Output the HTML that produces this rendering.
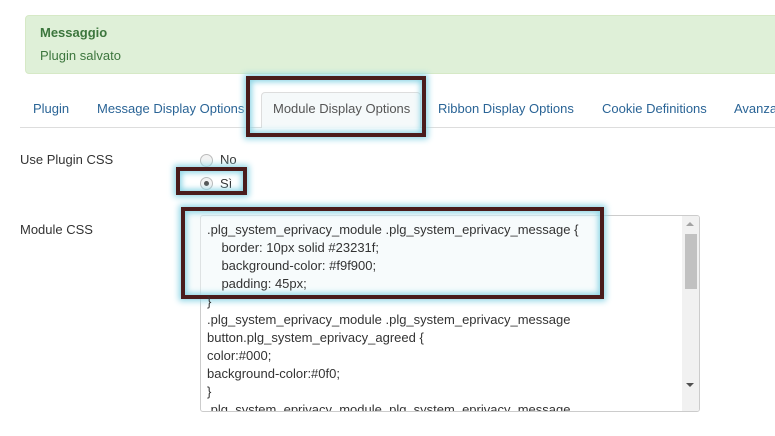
<!DOCTYPE html>
<html><head><meta charset="utf-8"><style>
body{margin:0;width:775px;height:436px;overflow:hidden;background:#fff;font-family:"Liberation Sans",sans-serif;font-size:13px;color:#333;position:relative}
.a{position:absolute}
.alert{left:25px;top:15px;width:760px;height:57px;background:#dff0d8;border:1px solid #d6e9c6;border-radius:4px}
.hl{position:absolute;border:4px solid #4a1c1c;box-shadow:0 0 6px 2px #8fd6e6, inset 0 0 6px 2px #8fd6e6;box-sizing:border-box;z-index:1}
.tab{position:absolute;top:101px;color:#2a6496;font-size:13px}
pre{margin:0;font-family:"Liberation Sans",sans-serif;font-size:13px;line-height:18px;color:#333}
</style></head><body>
<div class="a alert"></div>
<div class="a" style="left:40px;top:25px;font-weight:bold;color:#3c763d;font-size:13px">Messaggio</div>
<div class="a" style="left:40px;top:48px;color:#3c763d">Plugin salvato</div>
<div class="a" style="left:20px;top:127px;width:755px;height:1px;background:#ddd"></div>
<div class="a" style="left:261px;top:92px;width:160px;height:36px;border:1px solid #ddd;border-bottom:none;border-radius:4px 4px 0 0;box-sizing:border-box;background:#f5f9fa"></div>
<div class="tab" style="left:33px">Plugin</div>
<div class="tab" style="left:97px">Message Display Options</div>
<div class="tab" style="left:273px;color:#555">Module Display Options</div>
<div class="tab" style="left:438px">Ribbon Display Options</div>
<div class="tab" style="left:602px">Cookie Definitions</div>
<div class="tab" style="left:734px">Avanzate</div>
<div class="hl" style="left:246px;top:76px;width:180px;height:61px"></div>
<div class="a" style="left:20px;top:152px">Use Plugin CSS</div>
<div class="a" style="left:200px;top:154px;width:11px;height:11px;border:1px solid #bbb;border-radius:50%;background:#f3f3f3"></div>
<div class="a" style="left:220px;top:152px">No</div>
<div class="a" style="left:200px;top:177px;width:11px;height:11px;border:1px solid #bbb;border-radius:50%;background:#f3f3f3"></div>
<div class="a" style="left:204px;top:181px;width:5px;height:5px;border-radius:50%;background:#555"></div>
<div class="a" style="left:220px;top:176px">Sì</div>
<div class="hl" style="left:176px;top:167px;width:71px;height:28px"></div>
<div class="a" style="left:20px;top:222px">Module CSS</div>
<div class="a" style="left:200px;top:215px;width:500px;height:197px;border:1px solid #ccc;border-radius:3px;box-sizing:border-box;overflow:hidden">
<pre style="position:absolute;left:6px;top:5px;z-index:2">.plg_system_eprivacy_module .plg_system_eprivacy_message {
    border: 10px solid #23231f;
    background-color: #f9f900;
    padding: 45px;
}
.plg_system_eprivacy_module .plg_system_eprivacy_message
button.plg_system_eprivacy_agreed {
color:#000;
background-color:#0f0;
}
.plg_system_eprivacy_module .plg_system_eprivacy_message</pre>
<div class="a" style="right:0;top:0;width:17px;height:195px;background:#f1f1f1"></div>
<div class="a" style="right:2px;top:18px;width:12px;height:55px;background:#c1c1c1"></div>
<div class="a" style="right:5px;top:6px;width:0;height:0;border:4px solid transparent;border-bottom:4px solid #a3a3a3;border-top:none"></div>
<div class="a" style="right:5px;top:167px;width:0;height:0;border:4px solid transparent;border-top:4px solid #505050;border-bottom:none"></div>
</div>
<div class="hl" style="left:181px;top:207px;width:423px;height:92px;background:rgba(240,248,250,.5);z-index:0"></div>
</body></html>
